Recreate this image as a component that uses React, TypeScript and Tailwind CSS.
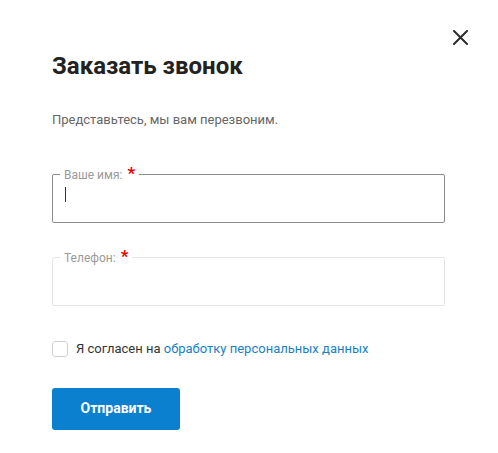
import React from "react";

function Field({ label, active }: { label: string; active?: boolean }) {
  return (
    <fieldset
      className={
        "rounded-[2px] border px-3 " +
        (active ? "border-[#8c8c8c]" : "border-[#e6e6e6]")
      }
    >
      <legend className="ml-[-5px] px-1 text-[12px] leading-[14px] text-[#9a9a9a]">
        {label}
        <span className="ml-[5px] text-[17px] font-bold leading-[14px] text-[#e10000]">*</span>
      </legend>
      <div className="flex h-[40px] items-start pt-[4px]">
        {active && <span className="mt-[1px] h-[15px] w-px shrink-0 bg-[#333]" />}
        <input className="block h-[20px] w-full bg-transparent text-[14px] text-[#333] caret-transparent outline-none" />
      </div>
    </fieldset>
  );
}

export default function App() {
  const [agree, setAgree] = React.useState(false);

  return (
    <div
      className="relative h-[453px] w-[498px] bg-white"
      style={{ fontFamily: "Roboto, 'Liberation Sans', sans-serif" }}
    >
      <button className="absolute right-[30px] top-[30px] text-[#2b2b2b]">
        <svg width="15" height="15" viewBox="0 0 15 15" fill="none">
          <path
            d="M1 1L14 14M14 1L1 14"
            stroke="currentColor"
            strokeWidth="2"
            strokeLinecap="round"
          />
        </svg>
      </button>

      <div className="flex flex-col pl-[52px] pr-[53px] pt-[52px]">
        <h2 className="text-[24px] font-bold leading-[28px] text-[#222]">
          Заказать звонок
        </h2>
        <p className="mt-[30px] text-[13px] leading-[20px] text-[#666]">
          Представьтесь, мы вам перезвоним.
        </p>

        <div className="mt-[36px] flex flex-col gap-[26px]">
          <Field label="Ваше имя:" active />
          <Field label="Телефон:" />
        </div>

        <label className="mt-[33px] flex cursor-pointer items-center gap-[8px] text-[13px] text-[#333]">
          <input
            type="checkbox"
            checked={agree}
            onChange={(e) => setAgree(e.target.checked)}
            className="h-[16px] w-[16px] appearance-none rounded-[3px] border border-[#cfcfcf] bg-white checked:bg-[#0a7fce]"
          />
          <span>
            Я согласен на{" "}
            <a href="#" className="text-[#1a7fc1]">
              обработку персональных данных
            </a>
          </span>
        </label>

        <div className="mt-[29px]">
          <button className="h-[42px] w-[128px] rounded-[3px] bg-[#0a80cf] text-[14px] font-bold text-white">
            Отправить
          </button>
        </div>
      </div>
    </div>
  );
}
